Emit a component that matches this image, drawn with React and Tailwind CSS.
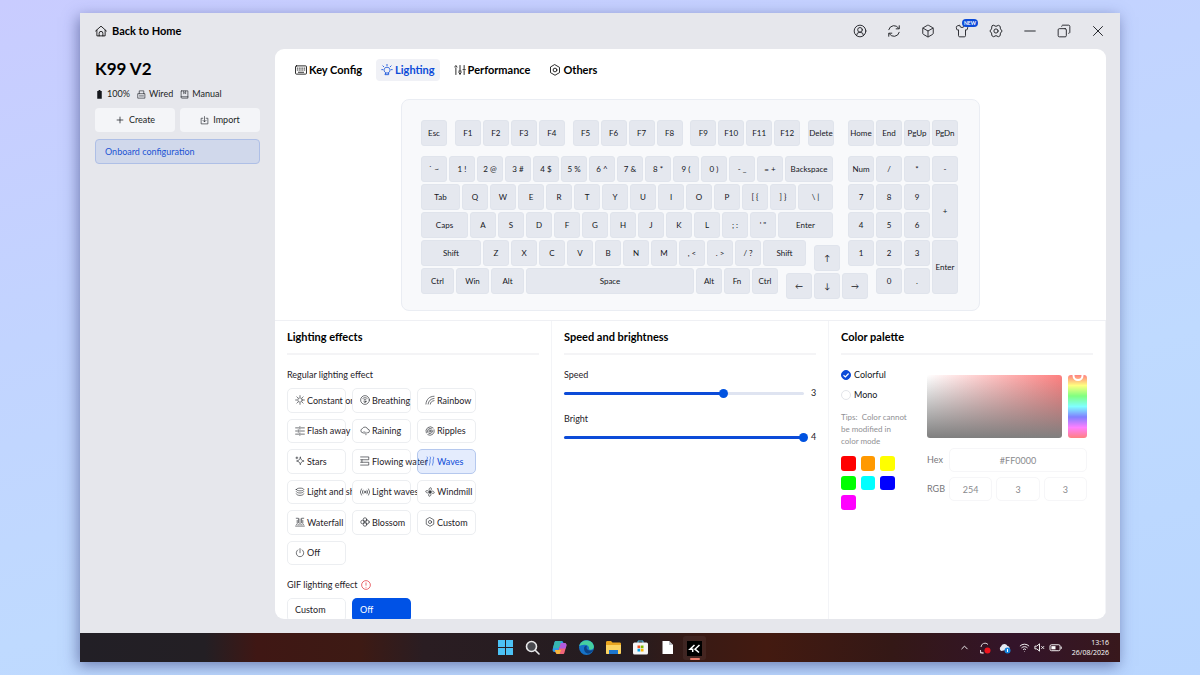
import { Box, ChevronUp, CircleUserRound, Copy, Minus, Plus, Shirt, X } from 'lucide-react';

const KEY = 'h-[26px] w-[26px]';

const ROWS = [
  [
    ['` ~'], ['1 !'], ['2 @'], ['3 #'], ['4 $'], ['5 %'], ['6 ^'], ['7 &'], ['8 *'], ['9 ('], ['0 )'], ['- _'], ['= +'],
    ['Backspace', 'h-[26px] w-12'],
  ],
  [
    ['Tab', 'h-[26px] w-[39px]'],
    ['Q'], ['W'], ['E'], ['R'], ['T'], ['Y'], ['U'], ['I'], ['O'], ['P'], ['[ {'], ['] }'],
    ['\\ |', 'h-[26px] w-[35px]'],
  ],
  [
    ['Caps', 'h-[26px] w-[47px]'],
    ['A'], ['S'], ['D'], ['F'], ['G'], ['H'], ['J'], ['K'], ['L'], ['; :'], ["' \""],
    ['Enter', 'h-[26px] w-[55px]'],
  ],
  [
    ['Shift', 'h-[26px] w-[60px]'],
    ['Z'], ['X'], ['C'], ['V'], ['B'], ['N'], ['M'], [', <'], ['. >'], ['/ ?'],
    ['Shift', 'h-[26px] w-[43px]'],
  ],
  [
    ['Ctrl', 'h-[26px] w-[33px]'],
    ['Win', 'h-[26px] w-[33px]'],
    ['Alt', 'h-[26px] w-[33px]'],
    ['Space', 'h-[26px] w-[168px]'],
    ['Alt'], ['Fn'], ['Ctrl'],
  ],
];

// arrow keys sit a little lower than the row they belong to
const ARROWS = { 3: ['↑'], 4: ['←', '↓', '→'] };

const F_GROUPS = [
  ['Esc'],
  ['F1', 'F2', 'F3', 'F4'],
  ['F5', 'F6', 'F7', 'F8'],
  ['F9', 'F10', 'F11', 'F12'],
  ['Delete'],
];

const NUMPAD = [
  ['Num'], ['/'], ['*'], ['-'],
  ['7'], ['8'], ['9'], ['+', 'row-span-2 w-[26px]'],
  ['4'], ['5'], ['6'],
  ['1'], ['2'], ['3'], ['Enter', 'row-span-2 w-[26px]'],
  ['0', 'col-start-2 h-[26px] w-[26px]'], ['.'],
];

const EFFECTS = [
  ['Constant on', 'sun'], ['Breathing', 'breath'], ['Rainbow', 'rainbow'],
  ['Flash away', 'flash'], ['Raining', 'rain'], ['Ripples', 'ripples'],
  ['Stars', 'star'], ['Flowing water', 'flow'], ['Waves', 'waves'],
  ['Light and sh', 'layers'], ['Light waves', 'signal'], ['Windmill', 'windmill'],
  ['Waterfall', 'waterfall'], ['Blossom', 'blossom'], ['Custom', 'hex'],
  ['Off', 'power'],
];

const SWATCHES = [
  ['Red', 'bg-[#ff0000]'], ['Orange', 'bg-[#ff9900]'], ['Yellow', 'bg-[#ffff00]'],
  ['Green', 'bg-[#00ff00]'], ['Cyan', 'bg-[#00ffff]'], ['Blue', 'bg-[#0000ff]'],
  ['Magenta', 'bg-[#ff00ff]'],
];

const SHAPES = {
  home: <path d="M.8 8 8 1.500 15.200 8M2.500 7v7.500h11V7M5.500 14.500V11a2.500 2.500 0 0 1 5 0v3.500" />,
  sun: (
    <>
      <circle cx="8" cy="8" r="3.6" />
      <path d="M8 1v1.6M8 13.4V15M1 8h1.6M13.4 8H15M3 3l1.2 1.2M11.8 11.8 13 13M3 13l1.2-1.2M11.8 4.2 13 3" />
    </>
  ),
  breath: (
    <>
      <circle cx="8" cy="8" r="7" />
      <path d="M4.5 5.500c2.300-1.700 4.700-1.700 7 0M6.300 7.500c1.100-.8 2.300-.8 3.400 0" />
      <circle cx="8" cy="10.600" r="1.500" />
    </>
  ),
  rainbow: <path d="M1.5 14.500C2 7 7 2 14.500 2M5 14.500c.5-5 4-8.500 9.500-9M8.500 14.500c.3-3 2.500-5 6-5.500" />,
  flash: (
    <>
      <path d="M1 3h5M9.500 3H15M1 8h2.500M7 8h8M1 13h5M9.500 13H15" />
      <path d="M7.800 1v4M5.200 6v4M7.800 11v4" />
    </>
  ),
  rain: <path d="M4.500 11A3.500 3.500 0 0 1 3.800 4.200 4.600 4.600 0 0 1 12.300 5a3 3 0 0 1-.3 6M6.500 9v3M9.500 10v4" />,
  ripples: (
    <>
      <path d="M2 11A7 7 0 0 1 13 3M14.600 6A7 7 0 0 1 4.500 14" />
      <path d="M4.500 10.500A4.400 4.400 0 0 1 11 4.800M12.300 7.500a4.400 4.400 0 0 1-6 4.500" />
      <circle cx="8" cy="8" r="1.800" />
    </>
  ),
  star: <path d="M8.500 2c.7 3.800 2.200 5.300 6 6-3.800.7-5.300 2.200-6 6-.7-3.800-2.200-5.300-6-6 3.800-.7 5.300-2.200 6-6zM3 1.500v3M1.500 3h3" />,
  flow: <path d="M1 1.500h13V6H3v4h11v4.500H1M1 6h2M1 10h2" />,
  waves: <path d="M3.500 1.500c2 2-1.500 4-.5 6.500s-1.500 4.500-1 6.500M8.500 1.500c2 2-1.500 4-.5 6.500s-1.500 4.500-1 6.500M13.500 1.500c2 2-1.500 4-.5 6.500s-1.500 4.500-1 6.500" />,
  layers: <path d="M2 4c0-3 12-3 12 0S2 7 2 4zM2 7.500c1 3 11 3 12 0M2 11c1 3.500 11 3.500 12 0" />,
  signal: (
    <>
      <circle cx="8" cy="8" r="1.500" />
      <path d="M4.800 5a4.500 4.500 0 0 0 0 6M11.200 5a4.500 4.500 0 0 1 0 6M2.300 3a8 8 0 0 0 0 10M13.700 3a8 8 0 0 1 0 10" />
    </>
  ),
  windmill: (
    <>
      <path d="M8 7C5.500 5 6 1.500 9.500 1.200c1.500 1.800.8 4-1.500 5.800zM9 8c2-2.500 5.500-2 5.800 1.500-1.800 1.500-4 .8-5.800-1.500zM8 9c2.500 2 2 5.500-1.500 5.800C5 13 5.700 10.800 8 9zM7 8c-2 2.500-5.500 2-5.800-1.500C3 5 5.200 5.700 7 8z" />
      <circle cx="8" cy="8" r="1" />
    </>
  ),
  waterfall: <path d="M2 2h3.500v7M14 2h-3.500v7M1 14.500h14M2 12c1.500-1.500 3-1.500 4 0 1.300-1.500 2.700-1.500 4 0 1-1.500 2.500-1.500 4 0M8 3v6M3.500 5.500V9M12.500 5.500V9" />,
  blossom: (
    <>
      <circle cx="8" cy="4" r="2.800" />
      <circle cx="8" cy="12" r="2.800" />
      <circle cx="4" cy="8" r="2.800" />
      <circle cx="12" cy="8" r="2.800" />
    </>
  ),
  hex: (
    <>
      <path d="M8 1 14 4.500v7L8 15l-6-3.500v-7z" />
      <circle cx="8" cy="8" r="2.500" />
    </>
  ),
  power: <path d="M8 1v6.500M4.500 3A6 6 0 1 0 11.500 3" />,
  gear: (
    <>
      <path d="M5.200 1.500 8 2.700l2.800-1.200 1.900 1.100.4 3L15 8l-1.900 2.400-.4 3-1.900 1.100L8 13.300l-2.800 1.200-1.900-1.100-.4-3L1 8l1.900-2.400.4-3z" />
      <circle cx="8" cy="8" r="2.400" />
    </>
  ),
  sync: <path d="M2 6.500A6.300 6.300 0 0 1 13.500 5M14 2v3.500h-3.500M14 9.500A6.300 6.300 0 0 1 2.500 11M2 14v-3.500h3.500" />,
  bulb: (
    <>
      <path d="M5.800 11.500C3 9.500 3.500 4.500 8 4.300c4.500.2 5 5.200 2.200 7.200v2.700H5.800zM6 12h4" />
      <path d="M8 .5v1.700M1 7.500h1.500M13.500 7.500H15M2.500 2.500l1.300 1.300M13.500 2.500l-1.300 1.300" />
    </>
  ),
  tune: <path d="M2.500 5v9M1 4l1.500-2L4 4M8 2v7M6.500 11 8 14l1.500-3M13.500 2v4M13.500 9v5M12 7.500h3M6.500 9.500h3" />,
  board: (
    <>
      <rect x=".7" y="2.500" width="14.600" height="11" rx="1.200" />
      <path d="M3 5.500h1M6 5.500h1M9 5.500h1M12 5.500h1M3 8h1M6 8h1M9 8h1M12 8h1M4.500 11h7" />
    </>
  ),
  drive: <path d="M4 6.500V1.500h8v5M2 6.500h12V14.500H2zM4.500 10.500h7" />,
  manual: <path d="M3 1.500h11v13H3.500c-1 0-1.500-.5-1.500-1.500V2.500c0-.5.500-1 1-1zM2 12h12M6.500 2v4.500L8.300 5l1.700 1.500V2" />,
  import: <path d="M5 4H2v10h12V4h-3M8 1v9M5 7.500 8 10.500 11 7.500" />,
};

function Shape({ name, className = 'size-[10px]', weight = 1.1 }) {
  return (
    <svg
      viewBox="0 0 16 16"
      fill="none"
      stroke="currentColor"
      strokeWidth={weight}
      strokeLinecap="round"
      strokeLinejoin="round"
      className={`shrink-0 ${className}`}
      aria-hidden="true"
    >
      {SHAPES[name]}
    </svg>
  );
}

function Key({ label, size = KEY }) {
  return (
    <button
      className={`${size} flex shrink-0 items-center justify-center rounded-[3px] border border-[#e0e4ec] bg-[#e5e8ef] text-[8px] whitespace-pre text-[#15171c]`}
    >
      {label}
    </button>
  );
}

function KeyboardView() {
  return (
    <div className="mx-auto flex gap-[14px] rounded-lg border border-[#eaedf3] bg-[#f8f9fb] pt-5 pr-[21px] pb-4 pl-[19px]">
      <div className="flex w-[413px] flex-col gap-0.5">
        <div className="mb-2 flex justify-between">
          {F_GROUPS.map((group) => (
            <div key={group[0]} className="flex gap-0.5">
              {group.map((k) => <Key key={k} label={k} />)}
            </div>
          ))}
        </div>
        {ROWS.map((row, i) => (
          <div key={i} className="flex h-[26px] items-start gap-0.5">
            {row.map(([label, size], j) => <Key key={j} label={label} size={size} />)}
            {ARROWS[i] && (
              <div className="flex gap-0.5 pt-[5px] pl-[6px]">
                {ARROWS[i].map((k) => <Key key={k} label={k} />)}
              </div>
            )}
          </div>
        ))}
      </div>
      <div>
        <div className="mb-[10px] flex gap-0.5">
          {['Home', 'End', 'PgUp', 'PgDn'].map((k) => <Key key={k} label={k} />)}
        </div>
        <div className="grid grid-cols-[repeat(4,26px)] grid-rows-[repeat(5,26px)] gap-0.5">
          {NUMPAD.map(([label, size]) => <Key key={label} label={label} size={size} />)}
        </div>
      </div>
    </div>
  );
}

function Panel({ title, children }) {
  return (
    <section className="min-w-0 flex-1 border-r border-[#f3f4f7] px-3">
      <h2 className="border-b-2 border-[#f4f4f6] pt-2 pb-2 text-[11px] leading-4 font-bold text-black">{title}</h2>
      {children}
    </section>
  );
}

function Slider({ label, id, value }) {
  const pct = ((value - 1) / 3) * 100;
  return (
    <div className="mb-2">
      <label htmlFor={id} className="block text-[9px] leading-4">{label}</label>
      <div className="flex h-5 items-center gap-[7px]">
        <div className="relative h-[3px] flex-1 rounded-full bg-[#dfe4f1]">
          <div className="h-full rounded-full bg-[#0c4bd8]" style={{ width: `${pct}%` }} />
          <input
            id={id}
            type="range"
            min="1"
            max="4"
            defaultValue={value}
            className="absolute -inset-x-1 -top-[3px] h-[9px] appearance-none bg-transparent [&::-webkit-slider-thumb]:size-[9px] [&::-webkit-slider-thumb]:appearance-none [&::-webkit-slider-thumb]:rounded-full [&::-webkit-slider-thumb]:bg-[#0052e0]"
          />
        </div>
        <span className="w-[5px] text-[9px]">{value}</span>
      </div>
    </div>
  );
}

function Effects() {
  return (
    <div className="pt-3">
      <h3 className="text-[9px] leading-4">Regular lighting effect</h3>
      <div className="mt-[5px] grid h-[177px] grid-cols-[repeat(3,59px)] grid-rows-6 gap-1.5">
        {EFFECTS.map(([label, icon]) => (
          <button
            key={label}
            className={`flex min-w-0 items-center gap-[2px] rounded-[5px] border pl-[7px] text-[9px] whitespace-nowrap ${
              label === 'Waves' ? 'border-[#b5c8ee] bg-[#4c82f0]/15 text-[#0c4bd8]' : 'border-[#eceef1] bg-white'
            }`}
          >
            <Shape name={icon} weight={1} />
            {label}
          </button>
        ))}
      </div>
      <h3 className="mt-3 flex items-center gap-[3px] text-[9px] leading-4">
        GIF lighting effect
        <svg viewBox="0 0 16 16" fill="none" stroke="#e5484d" strokeWidth="1.3" className="size-[10px]" aria-hidden="true">
          <circle cx="8" cy="8" r="7" />
          <path d="M8 4v5M8 11v1.200" />
        </svg>
      </h3>
      <div className="mt-[5px] grid grid-cols-[repeat(3,59px)] gap-1.5 text-[9px]">
        <button className="h-6 rounded-[5px] border border-[#eceef1] pl-[7px] text-left">Custom</button>
        <button className="h-6 rounded-[5px] bg-[#0052e6] pl-2 text-left text-white">Off</button>
      </div>
    </div>
  );
}

function Radio({ label, checked }) {
  return (
    <label className="flex h-5 items-center gap-[3px] text-[9px] text-[#15171c]">
      <span className="relative flex size-[10px]">
        <input
          type="radio"
          name="palette"
          defaultChecked={checked}
          className="size-[10px] appearance-none rounded-full border border-[#e3e5ea] checked:border-[#0c4bd8] checked:bg-[#0c4bd8]"
        />
        {checked && (
          <svg viewBox="0 0 10 10" fill="none" stroke="#fff" strokeWidth="1.200" className="absolute inset-0" aria-hidden="true">
            <path d="M2.500 5.200 4.400 7 7.600 3.500" />
          </svg>
        )}
      </span>
      {label}
    </label>
  );
}

function Palette() {
  const box = 'h-6 w-full min-w-0 rounded-[5px] border border-[#f6f6f8] text-center text-[9px] text-[#8a8a8e]';
  return (
    <div className="flex justify-between pt-[10px] pr-[6px]">
      <div className="w-[68px]">
        <Radio label="Colorful" checked />
        <Radio label="Mono" />
        <p className="mt-[6px] text-[8px] leading-3 text-[#909094]">Tips: &nbsp;Color cannot be modified in color mode</p>
        <div className="mt-[9px] grid w-[54px] grid-cols-3 gap-[5px]">
          {SWATCHES.map(([name, bg]) => (
            <button key={name} aria-label={name} className={`aspect-square rounded-[3px] ${bg}`} />
          ))}
        </div>
      </div>
      <div className="w-40 pt-[10px] text-[9px] text-[#77777b]">
        <div className="flex h-[63px] gap-[6px]">
          <div className="flex-1 rounded-[3px] bg-[linear-gradient(to_top,#7f7f7f,transparent),linear-gradient(to_right,#fff,#ff7f7f)]" />
          <div className="relative w-[19px] overflow-hidden rounded-[3px] bg-[linear-gradient(to_bottom,#ff8080,#ffff80,#80ff80,#80ffff,#8080ff,#ff80ff,#ff8080)]">
            <span className="absolute -top-[5px] left-1/2 size-[11px] -translate-x-1/2 rounded-full border-2 border-white" />
          </div>
        </div>
        <div className="mt-[10px] flex items-center">
          <label htmlFor="hex" className="w-[22px] shrink-0">Hex</label>
          <input id="hex" className={box} defaultValue="#FF0000" />
        </div>
        <div className="mt-[5px] flex items-center">
          <span className="w-[22px] shrink-0">RGB</span>
          <div className="flex gap-1">
            <input aria-label="Red" className={box} defaultValue="254" />
            <input aria-label="Green" className={box} defaultValue="3" />
            <input aria-label="Blue" className={box} defaultValue="3" />
          </div>
        </div>
      </div>
    </div>
  );
}

function TitleBar() {
  const icon = { size: 14, strokeWidth: 1.6 };
  const windowIcon = { size: 18, strokeWidth: 1.3 };
  return (
    <header className="flex h-9 shrink-0 items-center justify-between px-[15px] text-[#222429]">
      <a href="#home" className="flex items-center gap-[5px] text-[11px] font-bold text-black">
        <Shape name="home" className="size-3" />
        Back to Home
      </a>
      <div className="flex items-center gap-5">
        <button aria-label="Account"><CircleUserRound {...icon} /></button>
        <button aria-label="Sync"><Shape name="sync" className="size-[14px]" /></button>
        <button aria-label="Devices"><Box {...icon} /></button>
        <button aria-label="Themes" className="relative">
          <Shirt {...icon} />
          <span className="absolute -top-[5px] left-[7px] rounded-full bg-[#0c4bd8] px-[2px] text-[5px] leading-2 font-bold text-white">NEW</span>
        </button>
        <button aria-label="Settings"><Shape name="gear" className="size-[14px]" /></button>
        <button aria-label="Minimize" className="-mx-0.5"><Minus {...windowIcon} /></button>
        <button aria-label="Restore"><Copy {...icon} className="-scale-x-100" /></button>
        <button aria-label="Close" className="-mx-0.5"><X {...windowIcon} /></button>
      </div>
    </header>
  );
}

function Sidebar() {
  return (
    <aside className="w-[195px] shrink-0 px-[15px] pt-[10px] text-[#1c1f26]">
      <h1 className="text-[17px] leading-5 font-bold text-black">K99 V2</h1>
      <div className="mt-[7px] flex h-4 items-center gap-[7px] text-[9px]">
        <span className="flex items-center gap-[3px]">
          <svg viewBox="0 0 10 10" className="size-[9px]" aria-hidden="true">
            <path d="M4 0h2v1.200h1.500v8.600h-5V1.200H4z" fill="#15171c" />
          </svg>
          100%
        </span>
        <span className="flex items-center gap-[3px]"><Shape name="drive" className="size-[9px]" />Wired</span>
        <span className="flex items-center gap-[3px]"><Shape name="manual" className="size-[9px]" />Manual</span>
      </div>
      <div className="mt-[6px] grid grid-cols-2 gap-[5px] text-[9px]">
        <button className="flex h-6 items-center justify-center gap-1 rounded-[4px] bg-[#f4f5f8]"><Plus size={10} strokeWidth={1.800} />Create</button>
        <button className="flex h-6 items-center justify-center gap-1 rounded-[4px] bg-[#f4f5f8]"><Shape name="import" className="size-[9px]" />Import</button>
      </div>
      <button className="mt-[7px] h-[25px] w-full rounded-[4px] border border-[#aebfe6] bg-[#d0d8eb] pl-[9px] text-left text-[9px] text-[#1c54d4]">
        Onboard configuration
      </button>
    </aside>
  );
}

function Tabs() {
  const tab = 'flex h-[22px] items-center gap-[2px] rounded-[4px] px-[5px]';
  return (
    <nav className="flex gap-[9px] px-[15px] pt-[10px] text-[11px] font-bold text-black">
      <button className={tab}><Shape name="board" className="size-[12px]" />Key Config</button>
      <button className={`${tab} bg-[#f0f1f6] text-[#0c4bd8]`}><Shape name="bulb" className="size-[12px]" />Lighting</button>
      <button className={tab}><Shape name="tune" className="size-[12px]" />Performance</button>
      <button className={tab}><Shape name="hex" className="size-[12px]" />Others</button>
    </nav>
  );
}

function Taskbar() {
  return (
    <footer className="relative flex h-[29px] shrink-0 items-center justify-center gap-3 bg-[linear-gradient(to_right,#221f26,#231f24_12%,#3f1714_17%,#3d1a14_27%,#2a1d22_33%,#241c20_52%,#3a1a14_60%,#431a10_66%,#341816_78%,#33142a_90%,#38181c)] text-white">
      <button aria-label="Start">
        <svg viewBox="0 0 15 15" className="size-[15px]" fill="#4cc2f5"><path d="M0 0h7v7H0zM8 0h7v7H8zM0 8h7v7H0zM8 8h7v7H8z" /></svg>
      </button>
      <button aria-label="Search">
        <svg viewBox="0 0 15 15" className="size-[15px]" fill="#4a4a50" stroke="#e8e8ea" strokeWidth="1.600" strokeLinecap="round"><circle cx="6.500" cy="6.500" r="5" /><path d="m10.500 10.500 3.500 3.500" /></svg>
      </button>
      <button aria-label="Copilot">
        <svg viewBox="0 0 15 15" className="size-[15px]">
          <path d="M4 1h5.500c1 0 1.500.6 1.800 1.500L12 5H8.500L6 12H2.500C.8 12 .3 10.500.7 9L2.500 2.500C2.800 1.500 3.200 1 4 1z" fill="#2f9be8" />
          <path d="M2.500 2.500C2.800 1.500 3.200 1 4 1h5.500L7 8H1z" fill="#37b7b0" />
          <path d="M9 3h3.500c1.700 0 2.200 1.500 1.800 3l-1.800 6.500c-.3 1-.7 1.500-1.500 1.500H5.500c-1 0-1.500-.6-1.800-1.500L3 10h3.500z" fill="#f0657a" />
          <path d="M9 3h3.500c1.700 0 2.200 1.500 1.800 3l-.8 2.500H7.500z" fill="#b05be0" />
          <path d="M3 10h6l-1.500 4h-2c-1 0-1.500-.6-1.800-1.500z" fill="#f6b73c" />
        </svg>
      </button>
      <button aria-label="Edge">
        <svg viewBox="0 0 15 15" className="size-[15px]">
          <circle cx="7.500" cy="7.500" r="7.500" fill="#1673c9" />
          <path d="M.3 6C1.500-1.500 14-1.500 14.900 6.500c.3 3-3.500 3.800-5.200 2.700C11 7 8.500 4.500 5.500 4.700 3 4.800 1 5.500.3 6z" fill="#45d0a0" />
          <path d="M5 8.500c0-2 1.500-3 3-2.500-1 1.500-.3 4 2.500 4.500 1.500.3 2.800-.1 3.800-.7-1.300 3-4 4.200-5.800 3.700C6 12.800 5 10.500 5 8.500z" fill="#0c4488" />
        </svg>
      </button>
      <button aria-label="Files">
        <svg viewBox="0 0 15 15" className="size-[15px]">
          <path d="M0 2.500C0 1.500.5 1 1.500 1H5l1.500 1.500h7c1 0 1.500.5 1.500 1.500v8.500c0 .8-.5 1.500-1.500 1.500h-12C.5 14 0 13.500 0 12.500z" fill="#e9a520" />
          <path d="M0 5h15v7.500c0 .8-.5 1.500-1.500 1.500h-12C.5 14 0 13.500 0 12.500z" fill="#fcd462" />
          <path d="M3 10h9v4H3z" fill="#1d77cf" />
        </svg>
      </button>
      <button aria-label="Store">
        <svg viewBox="0 0 15 15" className="size-[15px]">
          <path d="M5 3V1h5v2" fill="none" stroke="#58c4ee" />
          <rect y="2.500" width="15" height="12" rx="1.500" fill="#f4f5f7" />
          <path d="M4.500 5.500h2.700v2.700H4.500z" fill="#f25022" />
          <path d="M7.800 5.500h2.700v2.700H7.800z" fill="#7fba00" />
          <path d="M4.500 8.800h2.700v2.700H4.500z" fill="#00a4ef" />
          <path d="M7.800 8.800h2.700v2.700H7.800z" fill="#ffb900" />
        </svg>
      </button>
      <button aria-label="Document">
        <svg viewBox="0 0 15 15" className="size-[15px]"><path d="M2.500 1h6.500l4 4v9H2.500z" fill="#fff" /><path d="M9 1v4h4z" fill="#bfc1c6" /></svg>
      </button>
      <button aria-label="Keyboard software" className="-mx-1 flex h-6 w-[23px] flex-col items-center justify-end gap-[2px] rounded-[3px] bg-white/5">
        <svg viewBox="0 0 15 15" className="size-[15px]">
          <path d="M0 0h15v15H0z" fill="#000" />
          <path d="M7.500 4 3 8.200h2.700v2.800M12.500 4 8 8.200l4 3.300" fill="none" stroke="#fff" strokeWidth="1.500" />
        </svg>
        <span className="h-0.5 w-2.5 rounded-full bg-[#e8796a]" />
      </button>
      <div className="absolute inset-y-0 right-[11px] flex items-center text-[8px]">
        <ChevronUp size={11} />
        <svg viewBox="0 0 12 12" className="ml-[9px] size-3" fill="none" stroke="#d8d0d4"><path d="M2 5a4 4 0 0 1 7-2.500M1.500 8v3h3M2 10c.5.800 1.500 1 2.500 1" /><circle cx="8.500" cy="8.500" r="3" fill="#f0141e" stroke="none" /></svg>
        <svg viewBox="0 0 12 12" className="ml-2 size-3"><path d="M2.500 9A2.500 2.500 0 0 1 2 4.500 3.500 3.500 0 0 1 8.500 4c1.500 0 2.500 1.500 2 3z" fill="#e4eaf2" /><circle cx="8.500" cy="8.500" r="3" fill="#1683dc" /><path d="M8.500 7v3" stroke="#fff" /></svg>
        <svg viewBox="0 0 12 12" className="ml-2 size-[11px]" fill="none" stroke="#fff" strokeWidth="1"><path d="M1 4.500a7 7 0 0 1 10 0M2.700 6.500a4.600 4.600 0 0 1 6.600 0M4.400 8.300a2.300 2.300 0 0 1 3.200 0M6 10v.5" /></svg>
        <svg viewBox="0 0 12 12" className="ml-1 size-[11px]" fill="none" stroke="#fff" strokeWidth="1"><path d="M1 4.500h2L6 2v8L3 7.500H1zM8 4.500l3 3M11 4.500l-3 3" /></svg>
        <svg viewBox="0 0 14 12" className="ml-1 h-[11px] w-[13px]" fill="none" stroke="#fff" strokeWidth="1"><rect x="1" y="3" width="11" height="6.500" rx="1.500" /><path d="M13.300 5v2.500" /><path d="M2.500 4.500h4.500V8H2.500z" fill="#fff" stroke="none" /></svg>
        <div className="ml-[10px] text-right font-['Open_Sans','Noto_Sans',sans-serif] text-[7px] leading-[10px]">
          <div>13:16</div>
          <div>26/08/2026</div>
        </div>
      </div>
    </footer>
  );
}

export default function App() {
  return (
    <div className="h-screen bg-[linear-gradient(165deg,#c9ccff,#c2d4ff_35%,#bfdaff_65%,#b9d6ff)] px-20 py-[13px] font-['Lato','Noto_Sans',sans-serif] text-[#1f2228]">
      <div className="flex h-full flex-col bg-[#e6e7ec] shadow-[-2px_4px_14px_rgba(60,70,130,0.6)]">
        <TitleBar />
        <div className="flex min-h-0 flex-1 pr-[14px] pb-[14px]">
          <Sidebar />
          <main className="flex min-w-0 flex-1 flex-col overflow-hidden rounded-[9px] bg-white">
            <Tabs />
            <div className="flex pt-[18px] pb-[9px]">
              <KeyboardView />
            </div>
            <div className="flex min-h-0 flex-1 border-t border-[#eff0f4]">
              <Panel title="Lighting effects"><Effects /></Panel>
              <Panel title="Speed and brightness">
                <div className="pt-3">
                  <Slider id="speed" label="Speed" value={3} />
                  <Slider id="bright" label="Bright" value={4} />
                </div>
              </Panel>
              <Panel title="Color palette"><Palette /></Panel>
            </div>
          </main>
        </div>
        <Taskbar />
      </div>
    </div>
  );
}
